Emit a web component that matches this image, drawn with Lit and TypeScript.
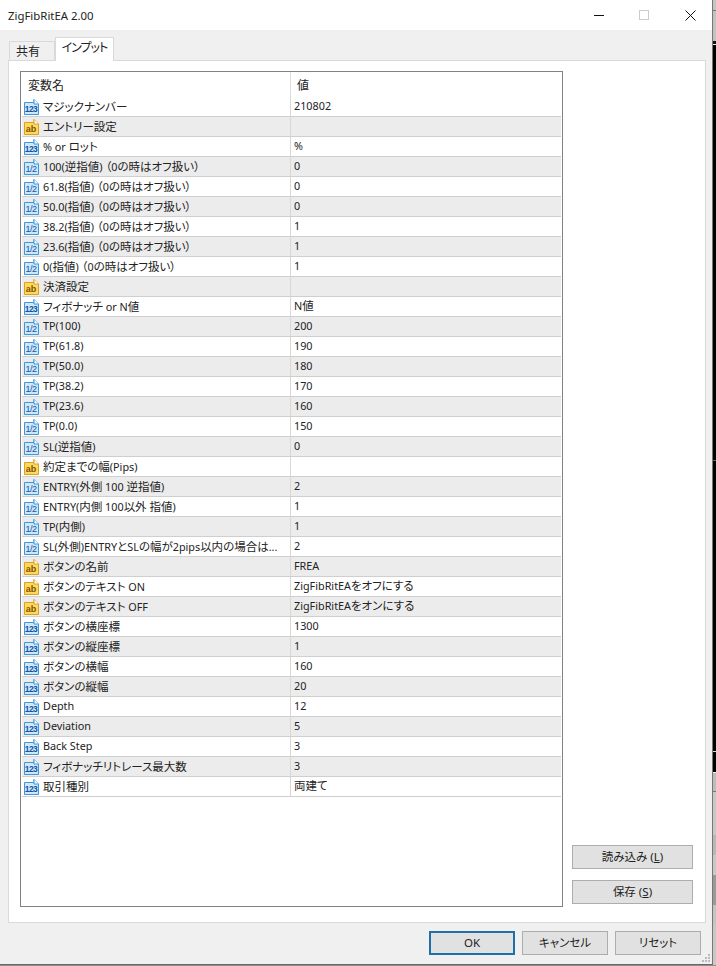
import { LitElement, html, css, svg } from "lit";
import { customElement } from "lit/decorators.js";

type Kind = "i" | "s" | "d";
const off = "（0の時はオフ扱い）";
const rows: [Kind, string, string][] = [
  ["i", "マジックナンバー", "210802"],
  ["s", "エントリー設定", ""],
  ["i", "% or ロット", "%"],
  ["d", "100(逆指値)" + off, "0"],
  ["d", "61.8(指値)" + off, "0"],
  ["d", "50.0(指値)" + off, "0"],
  ["d", "38.2(指値)" + off, "1"],
  ["d", "23.6(指値)" + off, "1"],
  ["d", "0(指値)" + off, "1"],
  ["s", "決済設定", ""],
  ["i", "フィボナッチ or N値", "N値"],
  ["d", "TP(100)", "200"],
  ["d", "TP(61.8)", "190"],
  ["d", "TP(50.0)", "180"],
  ["d", "TP(38.2)", "170"],
  ["d", "TP(23.6)", "160"],
  ["d", "TP(0.0)", "150"],
  ["d", "SL(逆指値)", "0"],
  ["s", "約定までの幅(Pips)", ""],
  ["d", "ENTRY(外側 100 逆指値)", "2"],
  ["d", "ENTRY(内側 100以外 指値)", "1"],
  ["d", "TP(内側)", "1"],
  ["d", "SL(外側)ENTRYとSLの幅が2pips以内の場合は...", "2"],
  ["s", "ボタンの名前", "FREA"],
  ["s", "ボタンのテキスト ON", "ZigFibRitEAをオフにする"],
  ["s", "ボタンのテキスト OFF", "ZigFibRitEAをオンにする"],
  ["i", "ボタンの横座標", "1300"],
  ["i", "ボタンの縦座標", "1"],
  ["i", "ボタンの横幅", "160"],
  ["i", "ボタンの縦幅", "20"],
  ["i", "Depth", "12"],
  ["i", "Deviation", "5"],
  ["i", "Back Step", "3"],
  ["i", "フィボナッチリトレース最大数", "3"],
  ["i", "取引種別", "両建て"],
];

const strip: [number, string][] = [
  [10, "#c4c4c4"], [1, "#777"], [30, "#c2c2c2"], [3, "#111"], [1, "#eee"],
  [415, "#000"], [1, "#666"], [290, "#000"], [1, "#ddd"], [20, "#000"],
  [1, "#eee"], [18, "#bdbdbd"], [1, "#777"], [43, "#c8c8c8"], [20, "#b8b8b8"],
  [20, "#c8c8c8"], [30, "#9a9a9a"], [20, "#c4c4c4"], [40, "#c8c8c8"],
];

/* Latin runs are set a little smaller than the CJK runs around them. */
function mixed(text: string) {
  return text
    .split(/([\x00-\x7f]+)/)
    .filter((p) => p)
    .map((p) => {
      if (/^[\x00-\x7f]/.test(p)) return html`<span class="lat">${p}</span>`;
      if (p.startsWith("（")) return html`<span class="fw">${p}</span>`;
      return html`<span>${p}</span>`;
    });
}

function icon(k: Kind) {
  const blue = k !== "s";
  const stroke = blue ? "#3a97da" : "#dca024";
  const fill = blue ? "#cfe7fb" : "#ffd95e";
  const ink = blue ? "#14549e" : "#7d5200";
  const label =
    k === "i"
      ? svg`<text x="8" y="14" class="n123" fill=${ink}>123</text>`
      : k === "s"
        ? svg`<text x="8" y="14" class="nab" fill=${ink}>ab</text>`
        : svg`<text x="8" y="13.5" class="nhalf" fill=${ink}>1/2</text>`;
  return html`<svg class="icon" viewBox="0 0 17 18" width="17" height="18">
    <path d="M1.5 4.5H11V1.5L15.5 6V16.5H1.5Z" fill=${fill} stroke=${stroke} />
    <path d="M11 1.5V6H15.5" fill="#fff" stroke=${stroke} />
    ${label}
  </svg>`;
}

@customElement("app-root")
export class AppRoot extends LitElement {
  static styles = css`
    :host {
      display: block;
      width: 716px;
      height: 966px;
      overflow: hidden;
      background: #b8b8b8;
      font-family: "Noto Sans", "Noto Sans CJK JP", sans-serif;
      font-size: 11.5px;
      font-feature-settings: "palt";
      color: #222;
    }
    .lat { font-size: 10.8px; }
    .fw { margin-left: 3px; }
    .screen { display: flex; height: 964px; }
    .window {
      position: relative;
      width: 712px;
      height: 964px;
      flex: none;
      display: flex;
      flex-direction: column;
      background: #f0f0f0;
      border-right: 1px solid #777;
      border-bottom: 1px solid #666;
    }
    .strip { width: 3px; flex: none; display: flex; flex-direction: column; }
    .strip i { display: block; flex: none; }
    .title {
      height: 30px;
      flex: none;
      background: #fff;
      display: flex;
      align-items: center;
      padding-left: 8px;
      font-size: 11.4px;
      color: #222;
    }
    .title .name { flex: 1; }
    .title svg { display: block; flex: none; }
    .controls { display: flex; }
    .controls span { height: 30px; display: flex; align-items: center; justify-content: center; }
    .controls .min { width: 42px; }
    .controls .max { width: 48px; }
    .controls .close { width: 44px; }
    .tabs { display: flex; align-items: flex-end; height: 31px; flex: none; padding: 0 0 0 9px; margin-bottom: -1px; }
    .tab {
      box-sizing: border-box;
      height: 20px;
      width: 46px;
      padding: 0 8px 1px 0;
      background: #f0f0f0;
      border: 1px solid #d9d9d9;
      border-bottom: none;
      display: flex;
      align-items: center;
      justify-content: center;
      font-size: 12px;
    }
    .tab.on {
      box-sizing: border-box;
      height: 24px;
      width: 59px;
      padding: 0 0 5px 0;
      background: #fff;
      position: relative;
      z-index: 1;
      letter-spacing: -1px;
    }
    .panel {
      width: 698px;
      height: 863px;
      margin-left: 8px;
      box-sizing: border-box;
      background: #fff;
      border: 1px solid #d9d9d9;
      padding: 10px 12px 15px 11px;
      display: flex;
      flex: none;
    }
    .table {
      width: 543px;
      box-sizing: border-box;
      border: 1px solid #828282;
      padding: 0 1px;
      flex: none;
      display: flex;
      flex-direction: column;
    }
    .row {
      display: grid;
      grid-template-columns: 268px 1fr;
      height: 20px;
      box-sizing: border-box;
      border-bottom: 1px solid #cfcfcf;
      align-items: center;
      background: #fff;
    }
    .row.alt { background: #ececec; }
    .row.head { height: 25px; border-bottom: none; }
    .head .c1 { padding-left: 6px; font-size: 12px; }
    .head .c2 { padding-left: 6px; font-size: 12px; height: 25px; line-height: 27px; border-left: 1px solid #dcdcdc; }
    .c1 { display: flex; align-items: center; white-space: nowrap; height: 19px; }
    .c1 .txt { padding-bottom: 2px; margin-left: -1px; }
    .c2 { padding-left: 3px; height: 19px; line-height: 18px; border-left: 1px solid #d8d8d8; white-space: nowrap; }
    .icon { flex: none; display: block; margin: 0 4px 0 1px; }
    .icon text { font-family: "Liberation Sans", sans-serif; text-anchor: middle; font-weight: 700; }
    .icon .n123 { font-size: 8.5px; letter-spacing: -0.5px; }
    .icon .nab { font-size: 9px; }
    .icon .nhalf { font-size: 9px; font-weight: 400; letter-spacing: -0.5px; }
    .side { flex: 1; display: flex; flex-direction: column; justify-content: flex-end; align-items: flex-end; gap: 11px; padding-bottom: 3px; }
    .btn {
      box-sizing: border-box;
      height: 24px;
      padding-bottom: 2px;
      background: #e1e1e1;
      border: 1px solid #adadad;
      display: flex;
      align-items: center;
      justify-content: center;
      font-size: 11.5px;
      white-space: pre;
      color: #222;
    }
    .btn.wide { width: 121px; }
    .btn u { text-underline-offset: 1px; }
    .footer { flex: 1; display: flex; justify-content: flex-end; gap: 7px; padding: 8px 11px 0 0; align-items: flex-start; }
    .footer .btn { width: 86px; }
    .btn.primary { border: 2px solid #1f70aa; }
    .grip { position: absolute; right: 1px; bottom: 1px; display: block; }
    .under { height: 2px; background: #8f8f8f; width: 716px; }
  `;

  render() {
    return html`
      <div class="screen">
        <div class="window">
          <div class="title">
            <span class="name">ZigFibRitEA 2.00</span>
            <div class="controls">
              <span class="min"><svg width="10" height="10" viewBox="0 0 10 10"><path d="M0 5.5H10" stroke="#111" /></svg></span>
              <span class="max"><svg width="10" height="10" viewBox="0 0 10 10"><rect x=".5" y=".5" width="9" height="9" fill="none" stroke="#ccc" /></svg></span>
              <span class="close"><svg width="11" height="11" viewBox="0 0 11 11"><path d="M.5.5L10.5 10.5M10.5.5L.5 10.5" stroke="#111" fill="none" /></svg></span>
            </div>
          </div>
          <div class="tabs">
            <div class="tab">共有</div>
            <div class="tab on">インプット</div>
          </div>
          <div class="panel">
            <div class="table">
              <div class="row head"><div class="c1">変数名</div><div class="c2">値</div></div>
              ${rows.map(
                ([k, n, v], i) => html`<div class="row ${i % 2 ? "alt" : ""}">
                  <div class="c1">${icon(k)}<span class="txt">${mixed(n)}</span></div>
                  <div class="c2">${mixed(v)}</div>
                </div>`
              )}
            </div>
            <div class="side">
              <div class="btn wide"><span>読み込み (<u>L</u>)</span></div>
              <div class="btn wide"><span>保存 (<u>S</u>)</span></div>
            </div>
          </div>
          <div class="footer">
            <div class="btn primary">OK</div>
            <div class="btn">キャンセル</div>
            <div class="btn">リセット</div>
          </div>
          <svg class="grip" width="10" height="10" viewBox="0 0 10 10" fill="#bbb">
            <rect x="7" y="1" width="2" height="2" /><rect x="4" y="4" width="2" height="2" />
            <rect x="7" y="4" width="2" height="2" /><rect x="1" y="7" width="2" height="2" />
            <rect x="4" y="7" width="2" height="2" /><rect x="7" y="7" width="2" height="2" />
          </svg>
        </div>
        <div class="strip">
          ${strip.map(([h, c]) => html`<i style="height:${h}px;background:${c}"></i>`)}
        </div>
      </div>
      <div class="under"></div>
    `;
  }
}
